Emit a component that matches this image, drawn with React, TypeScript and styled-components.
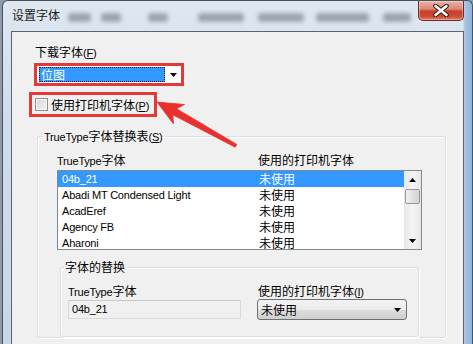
import React from 'react';
import styled, { createGlobalStyle } from 'styled-components';

const substitutions = [
    { font: '04b_21', printer: '未使用' },
    { font: 'Abadi MT Condensed Light', printer: '未使用' },
    { font: 'AcadEref', printer: '未使用' },
    { font: 'Agency FB', printer: '未使用' },
    { font: 'Aharoni', printer: '未使用' },
];

// blurred shapes seen through the glass title bar
const smudges = [
    { gap: 5, width: 23 },
    { gap: 10, width: 20 },
    { gap: 27, width: 20 },
    { gap: 30, width: 46 },
    { gap: 14, width: 46 },
    { gap: 12, width: 53 },
    { gap: 14, width: 28 },
];

const GlobalStyle = createGlobalStyle`
    html, body {
        margin: 0;
        padding: 0;
        background: #8e9aa8;
    }
    body {
        font-family: "Liberation Sans", "Noto Sans CJK SC", sans-serif;
        font-size: 12px;
        color: #000;
    }
`;

const Window = styled.div`
    position: relative;
    box-sizing: border-box;
    width: 471px;
    height: 344px;
    margin-left: 2px;
    padding: 0 8px;
    display: flex;
    flex-direction: column;
    border: 1px solid #46535f;
    border-bottom: none;
    border-radius: 6px 6px 0 0;
    background:
        linear-gradient(90deg, rgba(255,255,255,0) 98%, #a6c3e4 98.5%, #8fb3dc 100%),
        linear-gradient(180deg, #dfe8f1 0%, #d2dde9 30%, #c8d6e6 100%);
    overflow: hidden;
`;

const TitleBar = styled.div`
    height: 30px;
    display: flex;
    align-items: flex-start;
    flex-shrink: 0;
`;

const Title = styled.div`
    width: 51px;
    padding-left: 1px;
    margin-top: 6px;
    font-family: "Noto Sans CJK SC", sans-serif;
    font-size: 12px;
    line-height: 16px;
    color: #1b1b1b;
`;

const Smudges = styled.div`
    flex: 1;
    display: flex;
    margin-top: 12px;
`;

const Smudge = styled.span<{ $gap: number; $width: number }>`
    margin-left: ${(p) => p.$gap}px;
    width: ${(p) => p.$width}px;
    height: 9px;
    border-radius: 3px;
    background: #6f7a88;
    opacity: 0.6;
    filter: blur(2px);
`;

const CloseButton = styled.div`
    width: 46px;
    height: 20px;
    box-sizing: border-box;
    border: 1px solid #6a2b22;
    border-top: none;
    border-radius: 0 0 5px 5px;
    background: linear-gradient(180deg, #eab2a6 0%, #dc8b79 40%, #c4402d 55%, #cc4b35 80%, #e07b5e 100%);
    box-shadow: inset 0 0 0 1px rgba(255, 255, 255, 0.35);
    display: flex;
    align-items: center;
    justify-content: center;
`;

const Client = styled.div`
    flex: 1;
    display: flex;
    flex-direction: column;
    align-items: flex-start;
    padding-top: 13px;
    background: #f0f0f0;
    border: 1px solid #586574;
    border-bottom: none;
    overflow: hidden;
`;

const Label = styled.div<{ $indent?: number }>`
    height: 14px;
    margin-left: ${(p) => p.$indent ?? 0}px;
    font-family: "Noto Sans CJK SC", sans-serif;
    font-size: 12px;
    line-height: 14px;
    white-space: nowrap;
`;

const Latin = styled.span`
    font-family: "Liberation Sans", sans-serif;
    font-size: 11px;
    letter-spacing: -0.2px;
    line-height: 12px;
`;

const RedBox = styled.div<{ $indent: number; $top: number; $width: number; $height: number }>`
    box-sizing: border-box;
    margin-left: ${(p) => p.$indent}px;
    margin-top: ${(p) => p.$top}px;
    width: ${(p) => p.$width}px;
    height: ${(p) => p.$height}px;
    border: 3px solid #e23a3b;
    display: flex;
    align-items: center;
`;

const FontCombo = styled.div`
    flex: 1;
    align-self: stretch;
    display: flex;
    align-items: center;
    padding: 1px 0 1px 2px;
    background: #fff;
`;

const Selected = styled.div`
    box-sizing: border-box;
    width: 126px;
    height: 15px;
    padding-left: 2px;
    background: #3399ff;
    outline: 1px dotted #222;
    outline-offset: -1px;
    color: #fff;
    font-family: "Noto Sans CJK SC", sans-serif;
    font-size: 12px;
    line-height: 15px;
`;

const ArrowSlot = styled.div`
    flex: 1;
    display: flex;
    justify-content: center;
`;

const CheckRow = styled.div`
    display: flex;
    align-items: center;
    padding-left: 3px;
    gap: 3px;
`;

const CheckBox = styled.span`
    box-sizing: border-box;
    width: 13px;
    height: 13px;
    border: 1px solid #8e8f8f;
    background: linear-gradient(135deg, #d6d6d6 0%, #f4f4f4 100%);
    box-shadow: inset 0 0 0 1px #f6f6f6;
`;

const Group = styled.fieldset<{ $indent: number; $top: number; $width: number }>`
    box-sizing: border-box;
    margin: ${(p) => p.$top}px 0 0 ${(p) => p.$indent}px;
    padding: 0;
    min-width: 0;
    width: ${(p) => p.$width}px;
    border: 1px solid #d5dfe5;
    border-radius: 3px;
    box-shadow: inset 1px 1px 0 #fff, 1px 1px 0 #fff;
`;

const Legend = styled.legend<{ $offset: number }>`
    height: 14px;
    margin-left: ${(p) => p.$offset}px;
    padding: 0 2px 0 ${(p) => (p.$offset > 3 ? 2 : 1)}px;
    font-family: "Noto Sans CJK SC", sans-serif;
    font-size: 12px;
    line-height: 14px;
    white-space: nowrap;
`;

const GroupBody = styled.div<{ $pad: string }>`
    padding: ${(p) => p.$pad};
`;

const Columns = styled.div<{ $first: number }>`
    display: grid;
    grid-template-columns: ${(p) => p.$first}px 1fr;
`;

const ListBox = styled.div`
    box-sizing: border-box;
    margin-top: 3px;
    width: 365px;
    height: 80px;
    border: 1px solid #828790;
    background: #fff;
    display: flex;
`;

const Rows = styled.div`
    flex: 1;
    overflow: hidden;
`;

const Row = styled.div<{ $selected?: boolean }>`
    display: grid;
    grid-template-columns: 197px 1fr;
    height: 16px;
    line-height: 16px;
    background: ${(p) => (p.$selected ? '#3399ff' : 'transparent')};
    color: ${(p) => (p.$selected ? '#fff' : '#000')};
`;

const FontCell = styled.span`
    padding-left: 4px;
    font-size: 11px;
    letter-spacing: -0.2px;
    white-space: nowrap;
`;

const PrinterCell = styled.span`
    padding-left: 4px;
    font-family: "Noto Sans CJK SC", sans-serif;
    font-size: 12px;
`;

const ScrollBar = styled.div`
    width: 17px;
    display: flex;
    flex-direction: column;
    align-items: center;
    background: linear-gradient(90deg, #e6e6e6, #f3f3f3 40%, #f3f3f3 60%, #e6e6e6);
`;

const ScrollArrow = styled.div`
    height: 17px;
    display: flex;
    align-items: center;
    justify-content: center;
`;

const ScrollTrack = styled.div`
    flex: 1;
`;

const Thumb = styled.div`
    box-sizing: border-box;
    width: 15px;
    height: 15px;
    margin-top: 1px;
    border: 1px solid #979797;
    border-radius: 2px;
    background: linear-gradient(90deg, #f1f1f1, #e1e1e1 50%, #d3d3d3);
`;

const ReadOnlyField = styled.div`
    box-sizing: border-box;
    margin-top: 2px;
    width: 173px;
    height: 19px;
    padding-left: 3px;
    border: 1px solid #dadada;
    border-top-color: #c9c9c9;
    background: #f0f0f0;
    font-size: 11px;
    letter-spacing: -0.2px;
    line-height: 17px;
`;

const PrinterCombo = styled.div`
    box-sizing: border-box;
    margin-top: 1px;
    width: 150px;
    height: 21px;
    padding: 0 5px 0 3px;
    border: 1px solid #707070;
    border-radius: 3px;
    background: linear-gradient(180deg, #f2f2f2 0%, #ebebeb 50%, #dddddd 51%, #cfcfcf 100%);
    display: flex;
    align-items: center;
    justify-content: space-between;
    font-family: "Noto Sans CJK SC", sans-serif;
    font-size: 12px;
`;

const Annotation = styled.svg`
    position: absolute;
    left: 147px;
    top: 94px;
`;

const Triangle = ({ up = false }: { up?: boolean }) => (
    <svg width="7" height="4" viewBox="0 0 7 4">
        <path d={up ? 'M0 4 L3.5 0 L7 4 Z' : 'M0 0 L7 0 L3.5 4 Z'} fill="#000" />
    </svg>
);

const Mnemonic = ({ letter }: { letter: string }) => (
    <Latin>
        (<u>{letter}</u>)
    </Latin>
);

export default function App() {
    return (
        <>
            <GlobalStyle />
            <Window>
                <TitleBar>
                    <Title>设置字体</Title>
                    <Smudges>
                        {smudges.map((s, i) => (
                            <Smudge key={i} $gap={s.gap} $width={s.width} />
                        ))}
                    </Smudges>
                    <CloseButton>
                        <svg width="16" height="13" viewBox="0 0 16 13">
                            <path d="M2.5 2 L13.5 11 M13.5 2 L2.5 11" stroke="#3d1510" strokeWidth="4.6" strokeLinecap="round" />
                            <path d="M2.5 2 L13.5 11 M13.5 2 L2.5 11" stroke="#fff" strokeWidth="2.6" strokeLinecap="round" />
                        </svg>
                    </CloseButton>
                </TitleBar>

                <Client>
                    <Label $indent={23}>
                        下载字体<Mnemonic letter="F" />
                    </Label>
                    <RedBox $indent={22} $top={4} $width={150} $height={23}>
                        <FontCombo>
                            <Selected>位图</Selected>
                            <ArrowSlot>
                                <Triangle />
                            </ArrowSlot>
                        </FontCombo>
                    </RedBox>
                    <RedBox $indent={17} $top={6} $width={128} $height={25}>
                        <CheckRow>
                            <CheckBox />
                            <Label>
                                使用打印机字体<Mnemonic letter="P" />
                            </Label>
                        </CheckRow>
                    </RedBox>

                    <Group $indent={25} $top={12} $width={409}>
                        <Legend $offset={4}>
                            <Latin>TrueType</Latin>字体替换表<Mnemonic letter="S" />
                        </Legend>
                        <GroupBody $pad="10px 0 0 19px">
                            <Columns $first={201}>
                                <Label>
                                    <Latin>TrueType</Latin>字体
                                </Label>
                                <Label>使用的打印机字体</Label>
                            </Columns>
                            <ListBox>
                                <Rows>
                                    {substitutions.map((s, i) => (
                                        <Row key={s.font} $selected={i === 0}>
                                            <FontCell>{s.font}</FontCell>
                                            <PrinterCell>{s.printer}</PrinterCell>
                                        </Row>
                                    ))}
                                </Rows>
                                <ScrollBar>
                                    <ScrollArrow>
                                        <Triangle up />
                                    </ScrollArrow>
                                    <Thumb />
                                    <ScrollTrack />
                                    <ScrollArrow>
                                        <Triangle />
                                    </ScrollArrow>
                                </ScrollBar>
                            </ListBox>

                            <Group $indent={3} $top={10} $width={359}>
                                <Legend $offset={3}>字体的替换</Legend>
                                <GroupBody $pad="10px 0 16px 7px">
                                    <Columns $first={189}>
                                        <div>
                                            <Label>
                                                <Latin>TrueType</Latin>字体
                                            </Label>
                                            <ReadOnlyField>04b_21</ReadOnlyField>
                                        </div>
                                        <div>
                                            <Label $indent={1}>
                                                使用的打印机字体<Mnemonic letter="I" />
                                            </Label>
                                            <PrinterCombo>
                                                未使用
                                                <Triangle />
                                            </PrinterCombo>
                                        </div>
                                    </Columns>
                                </GroupBody>
                            </Group>
                        </GroupBody>
                    </Group>
                </Client>

                <Annotation width="95" height="60" viewBox="0 0 95 60">
                    <path
                        d="M7 7 L34.5 9.5 L26.5 13.8 L86.8 49.4 L85.2 52.2 L22.8 19.8 L23.5 29 Z"
                        fill="#e8302f"
                        stroke="#e8302f"
                        strokeWidth="0.8"
                        strokeLinejoin="round"
                    />
                </Annotation>
            </Window>
        </>
    );
}
